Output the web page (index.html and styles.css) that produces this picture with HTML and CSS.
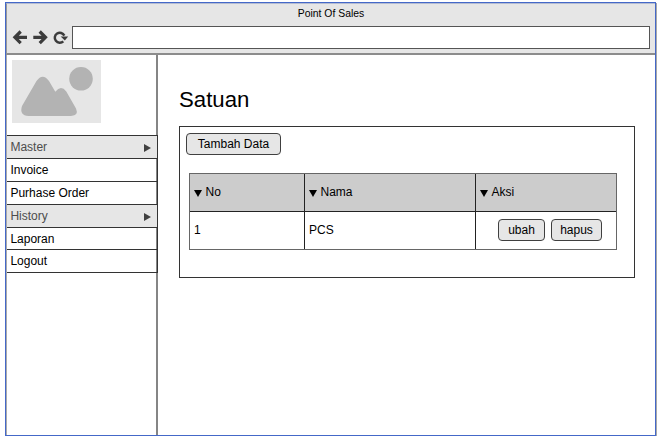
FILE: index.html
```html
<!DOCTYPE html>
<html lang="id">
<head>
<meta charset="utf-8">
<title>Point Of Sales</title>
<link rel="stylesheet" href="styles.css">
</head>
<body>
<div class="window">
  <header class="chrome">
    <div class="title">Point Of Sales</div>
    <div class="toolbar">
      <svg class="nav-icons" width="60" height="16" viewBox="0 0 60 16" fill="none" stroke="#3c3c3c">
        <path d="M15 8.300H3M8.700 2.500L2.900 8.300L8.700 14.100" stroke-width="3.200"/>
        <path d="M21.300 8.300H33.500M27.700 2.500L33.500 8.300L27.700 14.100" stroke-width="3.200"/>
        <path d="M51.300 12.300A5 5 0 1 1 52.300 6.600" stroke-width="2.500"/>
        <path d="M48.700 7.400H56.200L52.800 11.600Z" fill="#3c3c3c" stroke="none"/>
      </svg>
      <div class="address"></div>
    </div>
  </header>
  <div class="body">
    <aside class="sidebar">
      <svg class="logo" width="89" height="63" viewBox="0 0 89 63">
        <rect width="89" height="63" fill="#e6e6e6"/>
        <circle cx="69" cy="18.800" r="11.8" fill="#b3b3b3"/>
        <path d="M10 46L24.500 21Q30.700 12.400 37 21L43.300 31.700Q49 24.500 54.300 31.500L64 48.500Q67 55.500 59 56H16.500Q7 55.500 10 46Z" fill="#b3b3b3"/>
      </svg>
      <nav class="menu">
        <div class="item group">Master<span class="arrow"></span></div>
        <div class="item">Invoice</div>
        <div class="item">Purhase Order</div>
        <div class="item group">History<span class="arrow"></span></div>
        <div class="item short">Laporan</div>
        <div class="item">Logout</div>
      </nav>
    </aside>
    <main class="content">
      <h1>Satuan</h1>
      <section class="panel">
        <button class="btn add">Tambah Data</button>
        <div class="table">
          <div class="cell head"><span class="sort"></span>No</div>
          <div class="cell head"><span class="sort"></span>Nama</div>
          <div class="cell head"><span class="sort"></span>Aksi</div>
          <div class="cell">1</div>
          <div class="cell">PCS</div>
          <div class="cell actions"><button class="btn edit">ubah</button><button class="btn delete">hapus</button></div>
        </div>
      </section>
    </main>
  </div>
</div>
</body>
</html>
```
FILE: styles.css
```css
* { box-sizing: border-box; }
body {
  margin: 0;
  padding: 2px 0 0 5px;
  background: #fff;
  color: #000;
  font: 12px/14px "Liberation Sans", Arial, sans-serif;
  overflow: hidden;
}
.window {
  display: flex;
  flex-direction: column;
  width: 651px;
  height: 434px;
  border: 1px solid #4468c8;
  box-shadow: 1px 1px 0 #a8a8a8;
}
.chrome {
  height: 52px;
  background: #e6e6e6;
  border-bottom: 2px solid #8c8c8c;
  border-top: 1px solid #b4bcd2;
  border-left: 1px solid #999;
}
.title {
  height: 22px;
  padding-top: 2px;
  font-size: 10.4px;
  line-height: 15px;
  text-align: center;
}
.toolbar { display: flex; }
.nav-icons { margin: 3px 0 0 5px; }
.address {
  width: 578px;
  height: 23px;
  background: #fff;
  border: 1px solid #555;
}
.body { display: flex; flex: 1; }
.sidebar {
  width: 152px;
  border-left: 1px solid #aaa;
  border-right: 2px solid #858585;
}
.logo { display: block; margin: 5px 0 0 5px; }
.menu {
  width: 151px;
  margin-top: 12px;
  border-top: 1px solid #333;
  border-right: 1px solid #333;
}
.item {
  display: flex;
  align-items: center;
  justify-content: space-between;
  height: 23px;
  padding: 0 6px 0 3.4px;
  border-bottom: 1px solid #333;
}
.item.short { height: 22px; }
.item.group { background: #e6e6e6; color: #4d4d4d; }
.arrow {
  margin-top: 2px;
  border-left: 7px solid #404040;
  border-top: 4.5px solid transparent;
  border-bottom: 4.5px solid transparent;
}
.content { padding: 32px 0 0 21px; }
h1 {
  margin: 0;
  font-size: 22.2px;
  line-height: 26px;
  font-weight: normal;
}
.panel {
  width: 456px;
  height: 152px;
  margin-top: 13px;
  padding: 6px 0 0 6px;
  border: 1px solid #333;
}
.btn {
  display: block;
  height: 22px;
  margin: 0;
  padding: 0;
  border: 1px solid #404040;
  border-radius: 4px;
  background: #e6e6e6;
  color: #000;
  font: inherit;
}
.add { width: 95px; }
.table {
  display: grid;
  grid-template-columns: 115px 171px 140px;
  grid-template-rows: 38px 37px;
  width: 428px;
  margin: 18px 0 0 3px;
  border: 1px solid #666;
}
.cell {
  display: flex;
  align-items: center;
  padding: 0 0 2px 4px;
  border-right: 1px solid #222;
}
.cell:nth-child(3n) { border-right: 0; }
.head { padding-bottom: 1px; background: #ccc; border-bottom: 1px solid #222; }
.sort {
  margin: 2px 4px 0 -0.5px;
  border-top: 7px solid #000;
  border-left: 4px solid transparent;
  border-right: 4px solid transparent;
}
.actions { gap: 7px; padding-left: 22px; }
.edit { width: 47px; }
.delete { width: 51px; margin-left: -1px; }
```
